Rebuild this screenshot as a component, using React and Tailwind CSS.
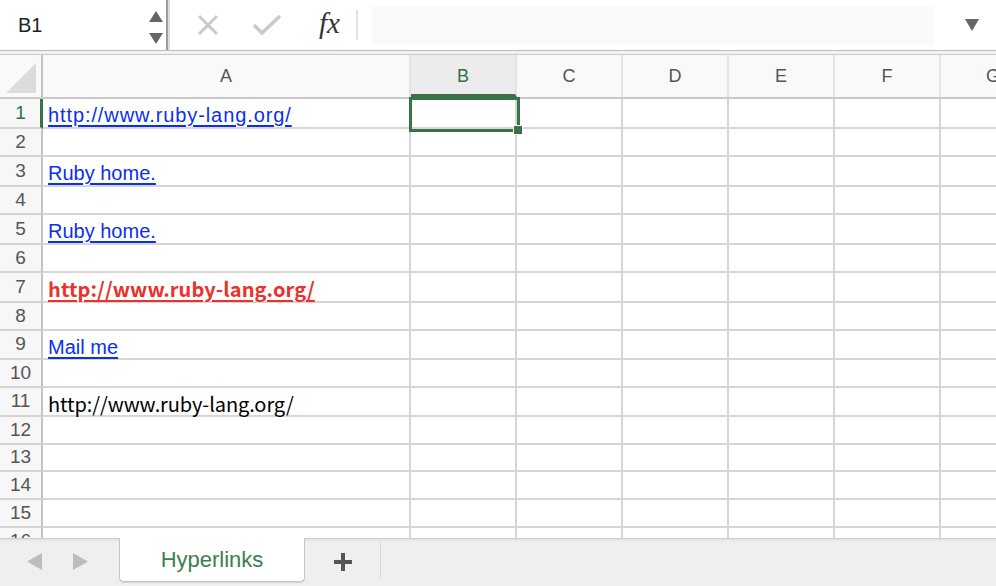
import React from "react";

const cols = ["A", "B", "C", "D", "E", "F", "G"];
const colW = ["w-[368px]", "w-[106px]", "w-[106px]", "w-[106px]", "w-[106px]", "w-[106px]", "w-[106px]"];

const rows = [
  { h: "h-[30px]", text: "http://www.ruby-lang.org/", kind: "url" },
  { h: "h-[28px]" },
  { h: "h-[30px]", text: "Ruby home.", kind: "link" },
  { h: "h-[28px]" },
  { h: "h-[30px]", text: "Ruby home.", kind: "link" },
  { h: "h-[28px]" },
  { h: "h-[30px]", text: "http://www.ruby-lang.org/", kind: "red" },
  { h: "h-[28px]" },
  { h: "h-[29px]", text: "Mail me", kind: "link" },
  { h: "h-[28px]" },
  { h: "h-[29px]", text: "http://www.ruby-lang.org/", kind: "plain" },
  { h: "h-[28px]" },
  { h: "h-[27px]" },
  { h: "h-[28px]" },
  { h: "h-[28px]" },
  { h: "h-[28px]" },
];

const textClass = {
  url: "text-[20px] tracking-[0.9px] text-[#0b2ff0] underline underline-offset-[3px] font-['Liberation_Sans',sans-serif]",
  link: "text-[20px] text-[#0b2ff0] underline underline-offset-[3px] font-['Liberation_Sans',sans-serif]",
  red: "text-[20px] tracking-[0.1px] font-bold text-[#e8322b] underline underline-offset-[3px] font-['Noto_Sans_CJK_JP',sans-serif]",
  plain: "text-[20px] tracking-[-0.1px] text-black font-['Noto_Sans_CJK_JP',sans-serif]",
};

function FormulaBar() {
  return (
    <div className="h-[50px] shrink-0 flex items-stretch bg-white">
      <div className="w-[166px] flex items-center justify-between pl-[18px] pr-[2px]">
        <span className="text-[20px] text-[#222] font-['Liberation_Sans',sans-serif]">B1</span>
        <svg width="16" height="40" viewBox="0 0 16 40">
          <polygon points="8,6 15,17 1,17" fill="#666" />
          <polygon points="1,28 15,28 8,39" fill="#666" />
        </svg>
      </div>
      <div className="w-[2px] bg-[#9c9c9c]" />
      <div className="w-[2px] bg-[#dcdcdc]" />
      <div className="flex items-center">
        <div className="w-[26px]" />
        <svg width="24" height="24" viewBox="0 0 24 24">
          <path d="M3 3 L21 21 M21 3 L3 21" stroke="#cacaca" strokeWidth="3" />
        </svg>
        <div className="w-[32px]" />
        <svg width="30" height="24" viewBox="0 0 30 24">
          <path d="M2 12 L10 20 L28 3" stroke="#cacaca" strokeWidth="3.5" fill="none" />
        </svg>
        <div className="w-[37px]" />
        <span className="italic text-[29px] text-[#333] font-['Liberation_Serif',serif] leading-none pb-[4px]">fx</span>
        <div className="w-[16px]" />
        <div className="w-[2px] h-[30px] bg-[#e2e2e2]" />
      </div>
      <div className="ml-[14px] my-[6px] w-[562px] bg-[#fafafa]" />
      <div className="flex-1 flex items-center justify-center pl-[15px]">
        <svg width="14" height="12" viewBox="0 0 14 12">
          <polygon points="0,0 14,0 7,12" fill="#666" />
        </svg>
      </div>
    </div>
  );
}

function HeaderRow() {
  return (
    <div className="flex h-[44px] shrink-0 border-b-2 border-[#c9c9c9] bg-[#f9f9f9]">
      <div className="w-[43px] shrink-0 border-r-2 border-[#c4c4c4] flex items-end justify-end pr-[5px] pb-[4px]">
        <svg width="30" height="30" viewBox="0 0 30 30">
          <polygon points="30,0 30,30 0,30" fill="#dcdcdc" />
        </svg>
      </div>
      {cols.map((c, i) => (
        <div
          key={c}
          className={`${colW[i]} shrink-0 flex items-center justify-center text-[18px] font-['Liberation_Sans',sans-serif] border-r-2 border-[#e4e4e4] ${
            c === "B" ? "bg-[#ececec] text-[#2f7446] border-b-[3px] border-b-[#3a724a] pt-[3px]" : "text-[#555]"
          }`}
        >
          {c}
        </div>
      ))}
    </div>
  );
}

function GridRow({ row, index }) {
  const n = index + 1;
  return (
    <div className={`flex ${row.h} shrink-0`}>
      <div
        className={`w-[43px] shrink-0 flex items-center justify-center text-[19px] font-['Liberation_Sans',sans-serif] border-b-2 border-[#d4d4d4] bg-[#f7f7f7] ${
          n === 1 ? "text-[#2f7446] border-r-[3px] border-r-[#3a724a] pl-[1px]" : "text-[#555] border-r-2 border-r-[#c4c4c4]"
        }`}
      >
        {n}
      </div>
      {cols.map((c, i) => (
        <div
          key={c}
          className={`${colW[i]} shrink-0 flex items-center border-r-2 border-b-2 border-[#d6d6d6] overflow-visible whitespace-nowrap`}
        >
          {i === 0 && row.text ? (
            <span className={`pl-[5px] pt-[4px] ${textClass[row.kind]}`}>{row.text}</span>
          ) : null}
        </div>
      ))}
    </div>
  );
}

function TabBar() {
  return (
    <div className="h-[48px] shrink-0 flex bg-[#efefef] border-t border-[#cfcfcf] shadow-[inset_0_3px_3px_-2px_rgba(0,0,0,0.08)]">
      <div className="w-[119px] shrink-0 flex items-center pl-[27px] gap-[31px] pb-[2px]">
        <svg width="15" height="17" viewBox="0 0 15 17">
          <polygon points="15,0 15,17 0,8.5" fill="#bcbcbc" />
        </svg>
        <svg width="15" height="17" viewBox="0 0 15 17">
          <polygon points="0,0 0,17 15,8.5" fill="#bcbcbc" />
        </svg>
      </div>
      <div className="w-[186px] shrink-0 -mt-px h-[44px] bg-white border-x border-b border-[#c6c6c6] rounded-b-[5px] shadow-[0_1px_1px_rgba(0,0,0,0.12)] flex items-center justify-center">
        <span className="text-[22px] text-[#3d7d50] font-['Liberation_Sans',sans-serif]">Hyperlinks</span>
      </div>
      <div className="w-[75px] shrink-0 flex items-center justify-center pb-[2px]">
        <svg width="20" height="20" viewBox="0 0 20 20">
          <path d="M10 1 V19 M1 10 H19" stroke="#555" strokeWidth="4" />
        </svg>
      </div>
      <div className="w-px h-[38px] mt-[2px] bg-[#d6d6d6]" />
    </div>
  );
}

export default function App() {
  return (
    <div className="w-[996px] h-[586px] overflow-hidden flex flex-col bg-white font-['Liberation_Sans',sans-serif]">
      <FormulaBar />
      <div className="h-px shrink-0 bg-[#bdbdbd]" />
      <div className="h-[3px] shrink-0 bg-[#f1f1f1]" />
      <div className="h-px shrink-0 bg-[#cacaca]" />
      <div className="relative flex-1 min-h-0 overflow-hidden flex flex-col">
        <HeaderRow />
        {rows.map((row, i) => (
          <GridRow key={i} row={row} index={i} />
        ))}
        <div className="absolute left-[409px] top-[42px] w-[111px] h-[35px] border-[3px] border-[#3a724a]">
          <div className="absolute -right-[6px] -bottom-[6px] w-[10px] h-[10px] bg-[#3a724a] border border-white" />
        </div>
      </div>
      <TabBar />
    </div>
  );
}
